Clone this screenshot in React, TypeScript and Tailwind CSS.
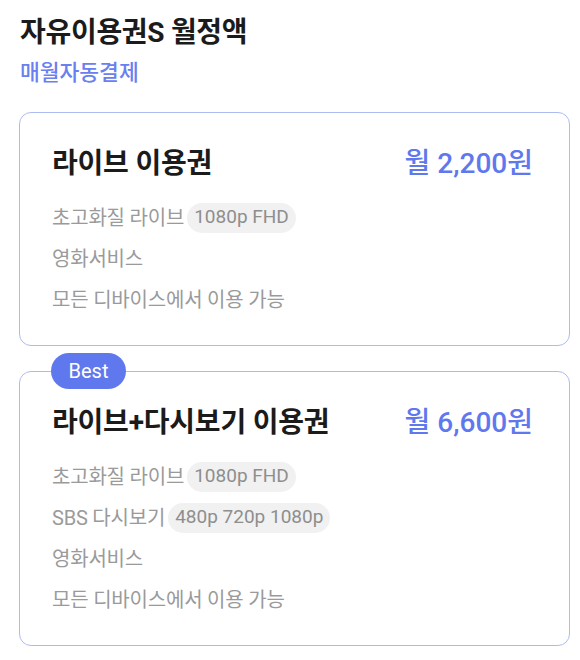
const font = "font-['Roboto','Noto_Sans_CJK_KR',sans-serif]";

type Feature = { label: string; chip?: string };

const plans: { name: string; price: string; best?: boolean; features: Feature[] }[] = [
  {
    name: '라이브 이용권',
    price: '월 2,200원',
    features: [
      { label: '초고화질 라이브', chip: '1080p FHD' },
      { label: '영화서비스' },
      { label: '모든 디바이스에서 이용 가능' },
    ],
  },
  {
    name: '라이브+다시보기 이용권',
    price: '월 6,600원',
    best: true,
    features: [
      { label: '초고화질 라이브', chip: '1080p FHD' },
      { label: 'SBS 다시보기', chip: '480p 720p 1080p' },
      { label: '영화서비스' },
      { label: '모든 디바이스에서 이용 가능' },
    ],
  },
];

function PlanCard({ plan }: { plan: (typeof plans)[number] }) {
  return (
    <div className="relative rounded-xl border-[1.5px] border-[#aebbf2] bg-white pl-8 pr-9 pt-[33px] pb-[25px]">
      {plan.best && (
        <div className="absolute -top-[19px] left-[31px] flex h-[36px] w-[75px] items-center justify-center rounded-full bg-[#5f78ee] text-[20px] text-white">
          Best
        </div>
      )}
      <div className="flex h-[36px] items-center justify-between">
        <span className="text-[28px] font-bold tracking-[-0.2px] text-[#1b1b1b]">{plan.name}</span>
        <span className="text-[28px] font-medium text-[#5f78ee]">{plan.price}</span>
      </div>
      <div className="mt-[15px] flex flex-col">
        {plan.features.map((f) => (
          <div key={f.label} className="flex h-[41px] items-center">
            <span className="text-[20px] tracking-[-0.2px] text-[#9a9a9a]">{f.label}</span>
            {f.chip && (
              <span className="ml-[3px] flex h-[30px] items-center rounded-full bg-[#f1f1f1] px-[7px] text-[19px] text-[#8e8e8e]">
                {f.chip}
              </span>
            )}
          </div>
        ))}
      </div>
    </div>
  );
}

export default function App() {
  return (
    <div className={`${font} min-h-[660px] w-[580px] bg-white pl-[19px] pr-[10px] pt-[15px]`}>
      <h1 className="ml-px text-[28px] font-bold leading-[36px] tracking-[-0.3px] text-[#1b1b1b]">자유이용권S 월정액</h1>
      <p className="ml-px mt-[8px] text-[21.5px] font-medium leading-[28px] text-[#6a80f0]">매월자동결제</p>
      <div className="mt-[25px] flex flex-col gap-[25px]">
        {plans.map((p) => (
          <PlanCard key={p.name} plan={p} />
        ))}
      </div>
    </div>
  );
}
